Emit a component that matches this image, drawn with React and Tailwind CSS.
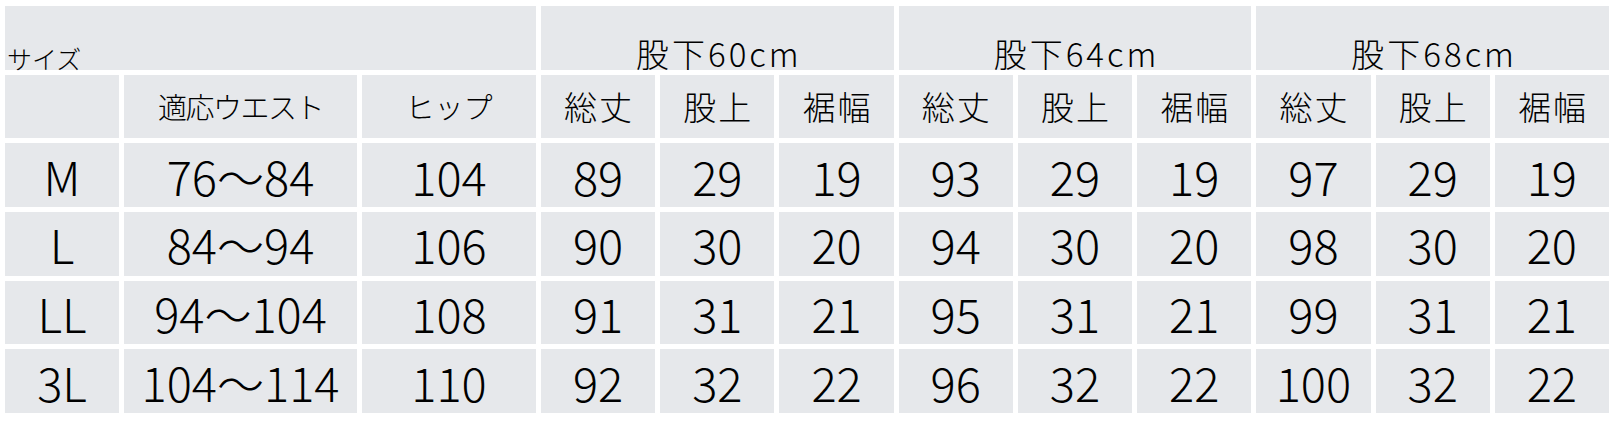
const groups = ['股下60cm', '股下64cm', '股下68cm']
const subs = ['総丈', '股上', '裾幅']

const rows = [
  { size: 'M', waist: '76～84', hip: '104', vals: ['89', '29', '19', '93', '29', '19', '97', '29', '19'] },
  { size: 'L', waist: '84～94', hip: '106', vals: ['90', '30', '20', '94', '30', '20', '98', '30', '20'] },
  { size: 'LL', waist: '94～104', hip: '108', vals: ['91', '31', '21', '95', '31', '21', '99', '31', '21'] },
  { size: '3L', waist: '104～114', hip: '110', vals: ['92', '32', '22', '96', '32', '22', '100', '32', '22'] },
]

const cell = 'bg-[#e6e8eb] flex items-center justify-center leading-none text-black'

export default function App() {
  return (
    <div className="bg-white w-[1616px] h-[439px] pt-[6px] pl-[5px] font-light font-['Noto_Sans_CJK_JP',sans-serif]">
      <div className="w-[1604px] h-[407px] grid grid-cols-[114px_233px_174px_repeat(9,1fr)] grid-rows-6 gap-[5px]">
        {/* 1段目 */}
        <div className="col-span-3 bg-[#e6e8eb] flex items-end pl-[2px] text-[25px] leading-none text-black">
          <span className="translate-y-[1px]">サイズ</span>
        </div>
        {groups.map(g => (
          <div key={g} className="col-span-3 bg-[#e6e8eb] flex items-end justify-center text-[33px] leading-none text-black tracking-[3px]">
            <span className="pl-[3px]">{g}</span>
          </div>
        ))}

        {/* 2段目 */}
        <div className="bg-[#e6e8eb]" />
        <div className={`${cell} text-[29px] tracking-[-1.5px]`}>適応ウエスト</div>
        <div className={`${cell} text-[29px]`}>ヒップ</div>
        {groups.map(g =>
          subs.map(s => (
            <div key={g + s} className={`${cell} text-[33px] tracking-[2px]`}>
              <span className="pl-[2px]">{s}</span>
            </div>
          ))
        )}

        {/* データ */}
        {rows.map(r => (
          <>
            <div key={r.size} className={`${cell} text-[47px]`}>{r.size}</div>
            <div className={`${cell} text-[47px]`}>{r.waist}</div>
            <div className={`${cell} text-[47px]`}>{r.hip}</div>
            {r.vals.map((v, i) => (
              <div key={i} className={`${cell} text-[47px]`}>{v}</div>
            ))}
          </>
        ))}
      </div>
    </div>
  )
}
